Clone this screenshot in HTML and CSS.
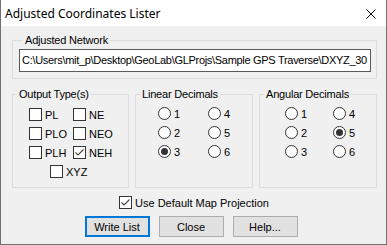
FILE: index.html
```html
<!DOCTYPE html>
<html lang="en">

<head>
    <meta charset="UTF-8">
    <meta name="viewport" content="width=device-width, initial-scale=1.0">
    <title>Adjusted Coordinates Lister</title>
    <link rel="stylesheet" href="styles.css">
</head>

<body>
    <div class="window">
        <div class="titlebar">
            <span class="title">Adjusted Coordinates Lister</span>
            <svg class="close" width="10" height="10" viewBox="0 0 10 10">
                <path d="M0.5 0.5 L9.5 9.5 M9.5 0.5 L0.5 9.5" stroke="#000" stroke-width="1" fill="none" />
            </svg>
        </div>

        <div class="content">
            <fieldset class="group network">
                <legend>Adjusted Network</legend>
                <div class="textbox">C:\Users\mit_p\Desktop\GeoLab\GLProjs\Sample GPS Traverse\DXYZ_30</div>
            </fieldset>

            <div class="options">
                <fieldset class="group output">
                    <legend>Output Type(s)</legend>
                    <div class="checks">
                        <label class="check"><span class="box"></span>PL</label>
                        <label class="check"><span class="box"></span>NE</label>
                        <label class="check"><span class="box"></span>PLO</label>
                        <label class="check"><span class="box"></span>NEO</label>
                        <label class="check"><span class="box"></span>PLH</label>
                        <label class="check"><span class="box"><svg width="11" height="11" viewBox="0 0 11 11"><path d="M1.5 5.5 L4 8 L9.5 2.5" stroke="#444" stroke-width="1.1" fill="none" /></svg></span>NEH</label>
                        <label class="check xyz"><span class="box"></span>XYZ</label>
                    </div>
                </fieldset>

                <fieldset class="group linear">
                    <legend>Linear Decimals</legend>
                    <div class="radios">
                        <label class="radio"><span class="dot"></span>1</label>
                        <label class="radio"><span class="dot"></span>4</label>
                        <label class="radio"><span class="dot"></span>2</label>
                        <label class="radio"><span class="dot"></span>5</label>
                        <label class="radio"><span class="dot on"></span>3</label>
                        <label class="radio"><span class="dot"></span>6</label>
                    </div>
                </fieldset>

                <fieldset class="group angular">
                    <legend>Angular Decimals</legend>
                    <div class="radios">
                        <label class="radio"><span class="dot"></span>1</label>
                        <label class="radio"><span class="dot"></span>4</label>
                        <label class="radio"><span class="dot"></span>2</label>
                        <label class="radio"><span class="dot on"></span>5</label>
                        <label class="radio"><span class="dot"></span>3</label>
                        <label class="radio"><span class="dot"></span>6</label>
                    </div>
                </fieldset>
            </div>

            <div class="projection">
                <label class="check"><span class="box"><svg width="11" height="11" viewBox="0 0 11 11"><path d="M1.5 5.5 L4 8 L9.5 2.5" stroke="#444" stroke-width="1.1" fill="none" /></svg></span>Use Default Map Projection</label>
            </div>

            <div class="buttons">
                <button class="btn default">Write List</button>
                <button class="btn">Close</button>
                <button class="btn">Help...</button>
            </div>
        </div>
    </div>
</body>

</html>
```

FILE: styles.css
```css
body {
    margin: 0;
    padding: 0;
    font-family: "Liberation Sans", Arial, sans-serif;
    font-size: 11px;
    color: #000;
}

.window {
    width: 387px;
    height: 245px;
    box-sizing: border-box;
    border: 1px solid #707070;
    border-top: none;
    background-color: #f0f0f0;
}

.titlebar {
    height: 26px;
    background-color: #fff;
    display: flex;
    align-items: center;
    justify-content: space-between;
    padding: 0 10px 0 4px;
}

.title {
    font-family: "Noto Sans", sans-serif;
    font-size: 12px;
    padding-top: 1px;
}

.close {
    display: block;
    margin-top: 2px;
}

.content {
    padding: 8px 0 0 11px;
}

.group {
    margin: 0;
    padding: 0;
    border: 1px solid #dcdcdc;
    min-width: 0;
}

.group legend {
    margin-left: 4px;
    padding: 0 2px;
    line-height: 13px;
    letter-spacing: -0.2px;
}

.network {
    width: 365px;
    box-sizing: border-box;
    padding: 2px 5px 6px 6px;
}

.textbox {
    height: 23px;
    box-sizing: border-box;
    border: 1px solid #5a5a5a;
    background-color: #fff;
    padding: 4px 0 0 2px;
    white-space: nowrap;
    overflow: hidden;
    letter-spacing: -0.3px;
}

.options {
    display: grid;
    grid-template-columns: 117px 118px 118px;
    column-gap: 6px;
    margin-top: 9px;
}

.options .group {
    height: 100px;
    box-sizing: border-box;
}

.checks {
    display: grid;
    grid-template-columns: 44px 44px;
    row-gap: 6px;
    padding: 7px 0 0 16px;
}

.check {
    display: flex;
    align-items: center;
    height: 13px;
}

.box {
    width: 13px;
    height: 13px;
    box-sizing: border-box;
    border: 1px solid #333;
    background-color: #fff;
    margin-right: 3px;
    flex-shrink: 0;
}

.box svg {
    display: block;
}

.xyz {
    grid-column: 1 / 3;
    margin-left: 21px;
}

.radios {
    display: grid;
    row-gap: 6px;
    padding-top: 6px;
}

.linear .radios {
    grid-template-columns: 50px 50px;
    padding-left: 22px;
}

.angular .radios {
    grid-template-columns: 48px 48px;
    padding-left: 25px;
}

.radio {
    display: flex;
    align-items: center;
    height: 13px;
}

.dot {
    width: 13px;
    height: 13px;
    box-sizing: border-box;
    border: 1px solid #333;
    border-radius: 50%;
    background-color: #fff;
    margin-right: 3px;
    display: flex;
    align-items: center;
    justify-content: center;
}

.dot.on::after {
    content: "";
    width: 7px;
    height: 7px;
    border-radius: 50%;
    background-color: #333;
}

.projection {
    display: flex;
    justify-content: center;
    margin-top: 8px;
    padding-right: 10px;
}

.buttons {
    display: flex;
    justify-content: center;
    gap: 9px;
    margin-top: 7px;
    padding-right: 16px;
}

.btn {
    width: 65px;
    height: 21px;
    box-sizing: border-box;
    border: 1px solid #adadad;
    background-color: #e1e1e1;
    font-family: "Liberation Sans", Arial, sans-serif;
    font-size: 11px;
    color: #000;
    padding: 0;
}

.btn.default {
    border: 2px solid #0078d7;
}
```
